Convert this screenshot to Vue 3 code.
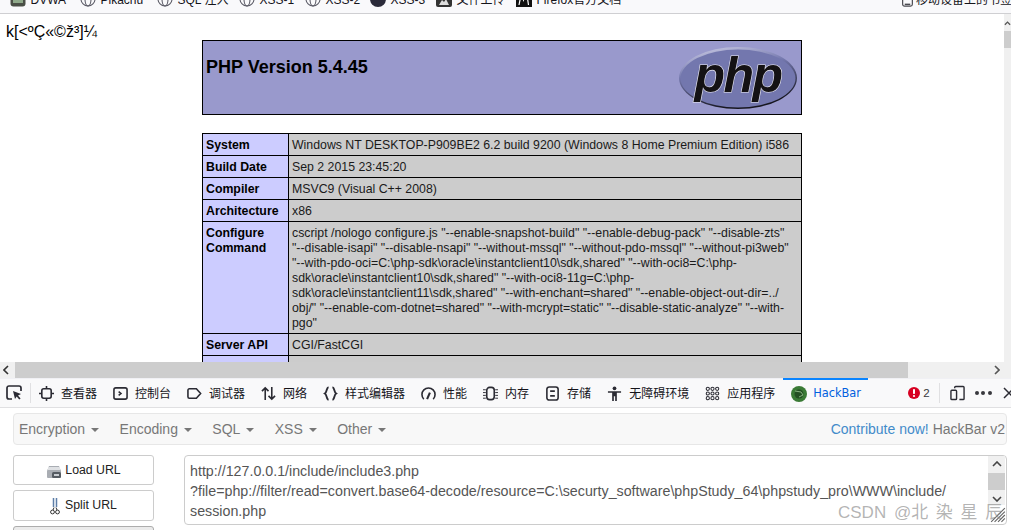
<script setup>
const bookmarks = [
  { label: 'DVWA', kind: 'dvwa', width: 70 },
  { label: 'Pikachu', kind: 'globe', width: 77 },
  { label: 'SQL 注入', kind: 'globe', width: 82 },
  { label: 'XSS-1', kind: 'globe', width: 66 },
  { label: 'XSS-2', kind: 'globe', width: 65 },
  { label: 'XSS-3', kind: 'xss', width: 66 },
  { label: '文件上传', kind: 'upload', width: 80 },
  { label: 'Firefox官方文档', kind: 'mdn', width: 110 }
]
const tabs = [
  { label: '查看器', kind: 'inspector' },
  { label: '控制台', kind: 'console' },
  { label: '调试器', kind: 'debugger' },
  { label: '网络', kind: 'network' },
  { label: '样式编辑器', kind: 'style' },
  { label: '性能', kind: 'perf' },
  { label: '内存', kind: 'memory' },
  { label: '存储', kind: 'storage' },
  { label: '无障碍环境', kind: 'a11y' },
  { label: '应用程序', kind: 'apps' }
]
const rows = [
  ['System', ['Windows NT DESKTOP-P909BE2 6.2 build 9200 (Windows 8 Home Premium Edition) i586']],
  ['Build Date', ['Sep 2 2015 23:45:20']],
  ['Compiler', ['MSVC9 (Visual C++ 2008)']],
  ['Architecture', ['x86']],
  ['Configure Command', [
    'cscript /nologo configure.js "--enable-snapshot-build" "--enable-debug-pack" "--disable-zts"',
    '"--disable-isapi" "--disable-nsapi" "--without-mssql" "--without-pdo-mssql" "--without-pi3web"',
    '"--with-pdo-oci=C:\\php-sdk\\oracle\\instantclient10\\sdk,shared" "--with-oci8=C:\\php-',
    'sdk\\oracle\\instantclient10\\sdk,shared" "--with-oci8-11g=C:\\php-',
    'sdk\\oracle\\instantclient11\\sdk,shared" "--with-enchant=shared" "--enable-object-out-dir=../',
    'obj/" "--enable-com-dotnet=shared" "--with-mcrypt=static" "--disable-static-analyze" "--with-',
    'pgo"'
  ]],
  ['Server API', ['CGI/FastCGI']],
  ['\u00a0', ['\u00a0']]
]
const menus = ['Encryption', 'Encoding', 'SQL', 'XSS', 'Other']
</script>

<template>
  <div class="app">
    <div class="bookmarks">
      <div class="bm-left">
        <span v-for="b in bookmarks" :key="b.label" class="bm" :style="{ width: b.width + 'px' }">
          <svg class="bm-icon" viewBox="0 0 16 16">
            <g v-if="b.kind === 'globe'" fill="none" stroke="#5b5b66" stroke-width="1.1">
              <circle cx="8" cy="8" r="7" />
              <ellipse cx="8" cy="8" rx="3" ry="7" />
              <path d="M1 8h14" />
            </g>
            <g v-else-if="b.kind === 'dvwa'">
              <rect x="0.5" y="0.5" width="15" height="15" rx="3" fill="#4a4f46" />
              <rect x="3" y="3" width="10" height="9" fill="#8fa98a" />
            </g>
            <g v-else-if="b.kind === 'xss'">
              <circle cx="8" cy="8" r="8" fill="#2b2b3a" />
              <rect x="3" y="3" width="10" height="4" fill="#c2224a" />
            </g>
            <g v-else-if="b.kind === 'upload'">
              <rect width="16" height="16" rx="2" fill="#333" />
              <path d="M3 14l3-5 2 2 2-3 3 6z" fill="#ddd" />
            </g>
            <g v-else>
              <rect width="16" height="16" fill="#111" />
              <path d="M3 14l2-10h1.500l1 5 2-5H11l1.500 10" fill="none" stroke="#fff" stroke-width="1.200" />
            </g>
          </svg>
          <span class="bm-label">{{ b.label }}</span>
        </span>
      </div>
      <span class="bm bm-mobile">
        <svg class="mobile-icon" viewBox="0 0 12 16">
          <rect x="0.700" y="0.700" width="10.600" height="14.600" rx="2" fill="none" stroke="#4a4a50" stroke-width="1.300" />
          <rect x="3" y="12.500" width="6" height="1.600" fill="#4a4a50" />
        </svg>
        <span class="bm-label">移动设备上的书签</span>
      </span>
    </div>

    <div class="viewport">
      <div class="page">
        <p class="garbled">k[&lt;ºÇ«©ž³]¼</p>
        <div class="php-head">
          <h1>PHP Version 5.4.45</h1>
          <svg class="php-logo" viewBox="0 0 118 62">
            <defs>
              <linearGradient id="rim" x1="0" y1="0" x2="0.35" y2="1">
                <stop offset="0" stop-color="#d4d4ea" />
                <stop offset="0.45" stop-color="#7478ae" />
                <stop offset="1" stop-color="#16161f" />
              </linearGradient>
            </defs>
            <ellipse cx="59" cy="31" rx="59" ry="31" fill="url(#rim)" />
            <ellipse cx="59" cy="31.500" rx="57.500" ry="29" fill="#7377ae" />
            <text x="59" y="45" text-anchor="middle" class="php-word">php</text>
          </svg>
        </div>
        <table class="info">
          <colgroup>
            <col class="col-label" />
            <col />
          </colgroup>
          <tbody>
            <tr v-for="(r, n) in rows" :key="n">
              <td class="label">{{ r[0] }}</td>
              <td class="value"><div v-for="(line, i) in r[1]" :key="i">{{ line }}</div></td>
            </tr>
          </tbody>
        </table>
      </div>
      <div class="vscroll">
        <svg class="v-arrow" viewBox="0 0 8 6"><path d="M1 5l3-3 3 3" fill="none" stroke="#555" stroke-width="1.500" /></svg>
        <div class="v-thumb"></div>
      </div>
    </div>

    <div class="hscroll">
      <svg class="h-arrow" viewBox="0 0 6 10"><path d="M5 1L1 5l4 4" fill="none" stroke="#333" stroke-width="1.600" /></svg>
      <div class="h-thumb"></div>
      <svg class="h-arrow right" viewBox="0 0 6 10"><path d="M1 1l4 4-4 4" fill="none" stroke="#555" stroke-width="1.600" /></svg>
    </div>

    <div class="devtools">
      <svg class="pick" viewBox="0 0 16 16">
        <path d="M6 14H3a2 2 0 0 1-2-2V3a2 2 0 0 1 2-2h10a2 2 0 0 1 2 2v3" fill="none" stroke="#2b2b33" stroke-width="1.700" />
        <path d="M7 6l8 3-3 1.400 2.600 3-1.400 1.200-2.500-3L9 14z" fill="#2b2b33" />
      </svg>
      <span class="sep"></span>
      <span v-for="t in tabs" :key="t.label" class="tab">
        <svg class="tab-icon" viewBox="0 0 16 16" fill="none" stroke="#2b2b33" stroke-width="1.700">
          <g v-if="t.kind === 'inspector'">
            <rect x="3" y="3" width="10" height="10" rx="2" />
            <path d="M8 0v3M8 13v3M0 8h3M13 8h3" />
          </g>
          <g v-else-if="t.kind === 'console'">
            <rect x="1" y="2" width="14" height="12" rx="2" />
            <path d="M6 6l2.500 2L6 10" />
          </g>
          <path v-else-if="t.kind === 'debugger'" d="M2.500 3h7.500l4.500 5-4.500 5H2.500a1.500 1.500 0 0 1-1.500-1.500v-7A1.500 1.500 0 0 1 2.500 3z" />
          <path v-else-if="t.kind === 'network'" d="M4.500 15V2M1 5.500L4.500 2 8 5.500M11.500 1v13M8 10.500l3.500 3.500 3.500-3.500" />
          <path v-else-if="t.kind === 'style'" stroke-width="2" d="M6 1.500C3.500 1.500 4.500 6.500 2 8c2.500 1.500 1.500 6.500 4 6.500M10 1.500c2.500 0 1.500 5 4 6.500-2.500 1.500-1.500 6.500-4 6.500" />
          <g v-else-if="t.kind === 'perf'">
            <path d="M3 14A7 7 0 1 1 13 14" />
            <path d="M6.500 14L9.500 7" stroke-width="2.200" />
          </g>
          <g v-else-if="t.kind === 'memory'">
            <rect x="4" y="1.500" width="8" height="13" rx="3" />
            <path d="M0 4h3M0 7h3M0 10h3M0 13h3M13 4h3M13 7h3M13 10h3M13 13h3" stroke-width="1" />
          </g>
          <g v-else-if="t.kind === 'storage'">
            <rect x="2" y="1" width="12" height="14" rx="2.500" />
            <path d="M5.500 5.500h5M5.500 10.500h5" />
          </g>
          <g v-else-if="t.kind === 'a11y'" fill="#2b2b33" stroke="none">
            <circle cx="8" cy="2.500" r="2" />
            <path d="M1 5.500h14v1.800h-4.500V16H8.700v-5H7.300v5H5.500V7.300H1z" />
          </g>
          <g v-else stroke-width="1.100">
            <circle v-for="p in [[3,3],[8,3],[13,3],[3,8],[8,8],[13,8],[3,13],[8,13],[13,13]]" :key="p.join()" :cx="p[0]" :cy="p[1]" r="1.700" />
          </g>
        </svg>
        <span class="tab-label">{{ t.label }}</span>
      </span>
      <span class="tab tab-active">
        <svg class="hb-icon" viewBox="0 0 16 16">
          <circle cx="8" cy="8" r="8" fill="#3a7a35" />
          <circle cx="8" cy="8" r="4.500" fill="#234f22" />
          <path d="M4 5l6 1 2 3-4 2" fill="none" stroke="#86b27f" stroke-width="1" />
        </svg>
        <span class="tab-label">HackBar</span>
      </span>
      <span class="dt-right">
        <span class="err">
          <svg class="err-icon" viewBox="0 0 12 12">
            <circle cx="6" cy="6" r="6" fill="#d70022" />
            <rect x="5" y="2" width="2" height="5" rx="0.800" fill="#fff" />
            <circle cx="6" cy="9" r="1.100" fill="#fff" />
          </svg>
          <span>2</span>
        </span>
        <span class="sep sep-right"></span>
        <svg class="dock" viewBox="0 0 16 16" fill="none" stroke="#2b2b33" stroke-width="1.500">
          <path d="M5 3V2a1 1 0 0 1 1-1h8a1 1 0 0 1 1 1v12a1 1 0 0 1-1 1h-4" />
          <rect x="1" y="5" width="6" height="10" rx="1" />
        </svg>
        <span class="dots"><i></i><i></i><i></i></span>
        <svg class="close" viewBox="0 0 12 12"><path d="M1 1l10 10M11 1L1 11" fill="none" stroke="#2b2b33" stroke-width="1.500" /></svg>
      </span>
    </div>

    <div class="hackbar">
      <nav class="hb-nav">
        <div class="hb-menus">
          <span v-for="m in menus" :key="m" class="hb-menu">{{ m }}<i class="caret"></i></span>
        </div>
        <div class="hb-brand"><span class="contribute">Contribute now!</span> HackBar v2</div>
      </nav>
      <div class="hb-body">
        <div class="hb-buttons">
          <div class="hb-btn">
            <svg class="btn-icon" viewBox="0 0 16 14">
              <path d="M3 1h10l2 5v6a1 1 0 0 1-1 1H2a1 1 0 0 1-1-1V6z" fill="#a9adb3" />
              <rect x="2" y="2" width="12" height="3" fill="#dfe1e4" />
              <rect x="6" y="7" width="9" height="6" rx="1.500" fill="#555b62" />
              <rect x="8" y="9" width="5" height="2" fill="#c9cdd2" />
            </svg>
            <span>Load URL</span>
          </div>
          <div class="hb-btn">
            <svg class="btn-icon scissors" viewBox="0 0 10 18" fill="none" stroke="#333" stroke-width="1">
              <path d="M3.500 1v9M6.500 1v9" stroke="#5f7fa8" stroke-width="1.500" />
              <path d="M5 1.500v7" stroke="#cfdcec" stroke-width="1" />
              <path d="M4 10.500l-1 2.500M6 10.500l1 2.500" />
              <circle cx="2.500" cy="15" r="1.900" />
              <circle cx="7.500" cy="15" r="1.900" />
            </svg>
            <span>Split URL</span>
          </div>
          <div class="hb-btn hb-btn-active"></div>
        </div>
        <div class="url-box">
          <div class="url-text">
            <div>http://127.0.0.1/include/include3.php</div>
            <div>?file=php://filter/read=convert.base64-decode/resource=C:\securty_software\phpStudy_64\phpstudy_pro\WWW\include/</div>
            <div>session.php</div>
          </div>
          <div class="url-scroll">
            <div class="u-track">
              <svg class="u-arrow up" viewBox="0 0 10 6"><path d="M1 5l4-4 4 4" fill="none" stroke="#444" stroke-width="1.600" /></svg>
              <div class="u-thumb"></div>
              <svg class="u-arrow down" viewBox="0 0 10 6"><path d="M1 1l4 4 4-4" fill="none" stroke="#444" stroke-width="1.600" /></svg>
            </div>
            <svg class="grip" viewBox="0 0 14 14"><path d="M13 1L1 13M13 4l-9 9M13 7l-6 6M13 10l-3 3" stroke="#666" stroke-width="1" /></svg>
          </div>
        </div>
      </div>
    </div>

    <div class="watermark">CSDN @北 染 星 辰</div>
  </div>
</template>

<style>
html, body { margin: 0; overflow: hidden; background: #fff; }
</style>

<style scoped>
.app {
  position: relative;
  width: 1011px;
  height: 530px;
  overflow: hidden;
  display: flex;
  flex-direction: column;
  font-family: "Liberation Sans", "Noto Sans CJK SC", sans-serif;
  color: #000;
}
.bookmarks {
  flex: none;
  height: 13px;
  border-bottom: 1px solid #cfcfd2;
  background: #f9f9fb;
  display: flex;
  justify-content: space-between;
  align-items: flex-end;
  overflow: hidden;
  padding-left: 10px;
  font-size: 12px;
  color: #15141a;
}
.bm-left { display: flex; height: 16px; margin-bottom: 6px; align-items: flex-end; flex: none; }
.bm { display: inline-flex; align-items: center; gap: 4.500px; white-space: nowrap; line-height: 16px; flex: none; }
.bm-label { position: relative; top: 1px; }
.bm-icon { width: 16px; height: 16px; flex: none; }
.bm-mobile { margin-bottom: 6px; gap: 3px; margin-right: -1px; height: 16px; }
.mobile-icon { width: 11px; height: 15px; flex: none; }

.viewport { flex: none; height: 348px; display: flex; background: #fff; }
.page { width: 1004px; overflow: hidden; }
.garbled { margin: 8px 0 0 6px; padding-top: 1px; font-size: 16px; line-height: 17px; height: 17px; }
.php-head {
  box-sizing: border-box;
  width: 600px;
  height: 75px;
  margin: 0 auto;
  border: 1px solid #000;
  background: #9999cc;
  display: flex;
  justify-content: space-between;
  padding: 0 4px 0 3px;
}
.php-head h1 { margin: 15px 0 0; font-size: 18px; font-weight: bold; line-height: 22px; }
.php-logo { width: 118px; height: 62px; flex: none; margin-top: 6px; }
.php-word {
  font: italic bold 50px "Liberation Sans", sans-serif;
  fill: #141214;
  stroke: #e8e8f2;
  stroke-width: 1.200px;
  paint-order: stroke;
  letter-spacing: -1.500px;
}
.info {
  width: 600px;
  margin: 18px auto 0;
  border-collapse: collapse;
  table-layout: fixed;
  font-size: 12.320px;
  line-height: 15px;
}
.col-label { width: 86px; }
.info td { border: 1px solid #000; padding: 4px 3px 2px; vertical-align: top; }
.label { background: #ccccff; font-weight: bold; }
.value { background: #cccccc; white-space: nowrap; overflow: hidden; color: #1a1a1a; }
.vscroll { flex: none; width: 7px; height: 348px; background: #f0f0f0; }
.v-arrow { display: block; width: 7px; height: 6px; margin: 6px 0 0; }
.v-thumb { width: 7px; height: 17px; margin-top: 5px; background: #cdcdcd; }

.hscroll { flex: none; height: 16px; background: #f0f0f0; display: flex; align-items: center; }
.h-arrow { width: 6px; height: 10px; flex: none; margin: 0 6px 0 3px; }
.h-arrow.right { margin: 0 11px 0 86px; }
.h-thumb { width: 893px; height: 16px; background: #cdcdcd; flex: none; }

.devtools {
  flex: none;
  height: 28px;
  border-top: 1px solid #f0f0f4;
  border-bottom: 1px solid #e0e0e2;
  background: #f9f9fa;
  display: flex;
  align-items: center;
  padding-left: 6px;
  font-size: 12px;
  color: #15141a;
  white-space: nowrap;
}
.pick { width: 16px; height: 16px; flex: none; margin-right: 8px; }
.sep { width: 1px; height: 20px; background: #e0e0e2; flex: none; }
.tab { display: inline-flex; align-items: center; height: 28px; padding: 0 8px; gap: 7px; flex: none; }
.tab-label { position: relative; top: -1px; }
.tab-icon { width: 15px; height: 15px; flex: none; }
.tab-active {
  box-sizing: border-box;
  height: 29px;
  margin-top: -1px;
  border-top: 2px solid #0a84ff;
  width: 85px;
  color: #0060df;
  gap: 6px;
  font-family: "DejaVu Sans", sans-serif;
  font-size: 11.400px;
}
.hb-icon { width: 16px; height: 16px; flex: none; }
.dt-right { display: flex; align-items: center; margin-left: 40px; flex: none; }
.err { display: inline-flex; align-items: center; gap: 3px; font-size: 11.500px; color: #38383d; }
.err-icon { width: 12px; height: 12px; flex: none; }
.sep-right { margin: 0 10px 0 9px; }
.dock { width: 15px; height: 16px; flex: none; }
.dots { display: inline-flex; gap: 2.500px; margin-left: 10px; margin-right: 11px; }
.dots i { width: 4px; height: 4px; border-radius: 50%; background: #38383d; display: block; }
.close { width: 12px; height: 12px; flex: none; }

.hackbar { flex: 1; min-height: 0; background: #fff; padding: 5px 4px 0 13px; }
.hb-nav {
  box-sizing: border-box;
  height: 32px;
  background: #f8f8f8;
  border: 1px solid #e7e7e7;
  border-radius: 4px;
  display: flex;
  justify-content: space-between;
  align-items: center;
  padding: 0 1px 0 5px;
  font-size: 14px;
  color: #777;
  white-space: nowrap;
}
.hb-menus { display: flex; gap: 20.400px; }
.hb-menu { display: inline-flex; align-items: center; gap: 6px; }
.caret { width: 0; height: 0; border-left: 4px solid transparent; border-right: 4px solid transparent; border-top: 4px solid #777; margin-top: 1px; }
.contribute { color: #428bca; }

.hb-body { display: flex; gap: 30px; margin-top: 10px; }
.hb-buttons { width: 141px; flex: none; display: flex; flex-direction: column; gap: 5px; }
.hb-btn {
  box-sizing: border-box;
  height: 30px;
  flex: none;
  border: 1px solid #ccc;
  border-radius: 3px;
  background: #fff;
  display: flex;
  align-items: center;
  justify-content: center;
  gap: 3px;
  font-size: 12.300px;
  color: #222;
}
.hb-btn:nth-child(2) { height: 31px; gap: 5px; padding-bottom: 2px; }
.hb-btn-active { background: #ebebeb; border-color: #adadad; }
.btn-icon { width: 16px; height: 14px; flex: none; margin-top: 3px; }
.scissors { width: 10px; height: 18px; margin-top: 2px; }
.url-box {
  box-sizing: border-box;
  width: 823px;
  height: 70px;
  flex: none;
  border: 1px solid #ccc;
  border-radius: 4px;
  display: flex;
  justify-content: space-between;
  background: #fff;
}
.url-text { padding: 5px 5px; font-size: 14.250px; line-height: 20px; color: #555; white-space: nowrap; }
.url-scroll { width: 17px; flex: none; position: relative; margin-right: 1px; }
.u-track { height: 49px; background: #f0f0f0; display: flex; flex-direction: column; align-items: center; }
.u-arrow { width: 10px; height: 6px; flex: none; }
.u-arrow.up { margin: 5px 0 6px; }
.u-arrow.down { margin-top: 6px; }
.u-thumb { width: 17px; height: 17px; background: #cdcdcd; flex: none; }
.grip { position: absolute; right: -1px; bottom: 1px; width: 16px; height: 16px; }

.watermark {
  position: absolute;
  left: 838px;
  top: 502px;
  font-size: 17px;
  line-height: 22px;
  color: rgba(130, 130, 130, 0.6);
  white-space: nowrap;
  word-spacing: 3px;
}
</style>
